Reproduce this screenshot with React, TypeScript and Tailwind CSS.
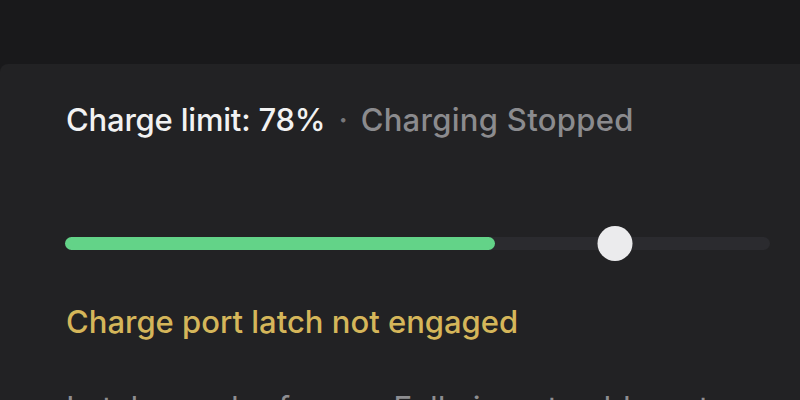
const limit = 78;
const level = 61;

export default function App() {
  return (
    <div
      className="flex h-[400px] w-[800px] flex-col overflow-hidden bg-[#19191b]"
      style={{ fontFamily: 'Inter, "Liberation Sans", sans-serif' }}
    >
      <div className="h-16 shrink-0" />
      <section className="flex-1 rounded-tl-lg bg-[#222224] pl-[66px] pr-[30px] pt-[38px]">
        <div className="flex items-center text-[31px] font-medium leading-9 tracking-[-0.2px]">
          <span className="text-[#f2f2f2]">Charge limit: {limit}%</span>
          <span className="mx-[13px] text-[#77777a]">·</span>
          <span className="tracking-[0.3px] text-[#8b8b8e]">Charging Stopped</span>
        </div>

        <div className="relative ml-[-1px] mt-[88px] flex h-[35px] items-center">
          <div className="h-[13px] w-full rounded-full bg-[#2b2b2f]">
            <div className="h-full rounded-full bg-[#63d388]" style={{ width: `${level}%` }} />
          </div>
          <div
            className="absolute top-0 h-[35px] w-[35px] -translate-x-1/2 rounded-full bg-[#ebebed]"
            style={{ left: `${limit}%` }}
          />
        </div>

        <p className="mt-[43px] text-[31px] font-medium leading-9 text-[#d5b65a]">
          Charge port latch not engaged
        </p>
        <p className="mt-[51px] text-[32px] leading-9 text-[#8e8e91]">
          Latch may be frozen. Fully insert cable or try again.
        </p>
      </section>
    </div>
  );
}
